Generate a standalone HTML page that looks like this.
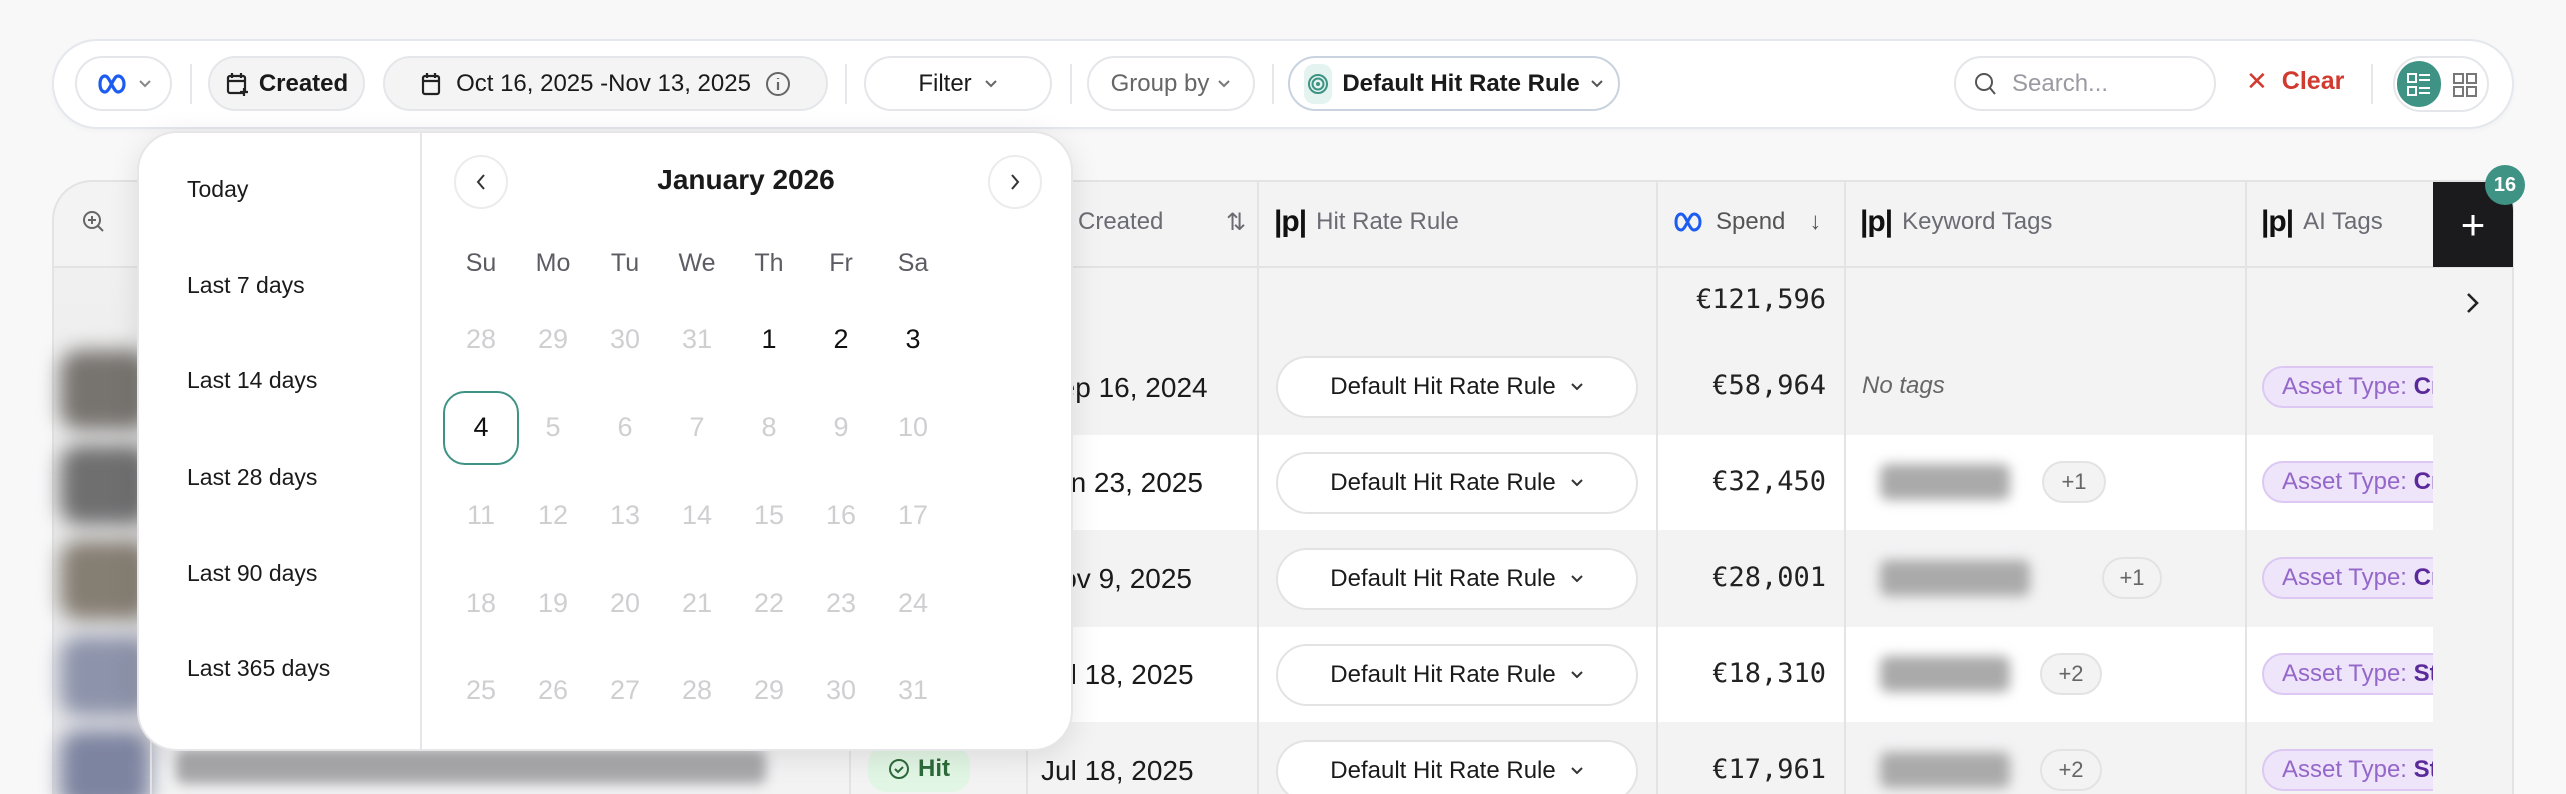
<!DOCTYPE html>
<html><head><meta charset="utf-8">
<style>
*{box-sizing:border-box;margin:0;padding:0}
html{width:2566px;height:794px;overflow:hidden}
body{width:2566px;height:794px;overflow:hidden;background:#f8f8f9;font-family:"Liberation Sans",sans-serif;color:#1a1a1a;position:relative}
.a{position:absolute}
.btn{position:absolute;top:56px;height:55px;border:2px solid #e4e6ea;border-radius:28px;background:#fff;display:flex;align-items:center;justify-content:center;font-size:24px;gap:12px}
.sep{position:absolute;top:64px;width:2px;height:40px;background:#e6e7ea}
.vl{position:absolute;top:180px;width:2px;height:614px;background:#e3e3e3}
.hd{position:absolute;top:200px;font-size:24px;color:#6b6b73;display:flex;align-items:center;gap:10px;height:44px}
.pp{font-weight:bold;color:#111;font-size:30px;letter-spacing:-1px}
.rule{position:absolute;left:1276px;width:362px;height:62px;border:2px solid #e3e3e3;border-radius:31px;background:#fff;display:flex;align-items:center;justify-content:center;font-size:24px;gap:14px}
.sp{position:absolute;right:740px;font-family:"DejaVu Sans Mono","Liberation Mono",monospace;font-size:27px;color:#222}
.dt{position:absolute;left:1041px;font-size:28px;color:#1a1a1a}
.ai{position:absolute;left:2262px;width:200px;height:42px;border:2px solid #dcc8f3;background:#efe5fb;border-radius:21px 0 0 21px;font-size:24px;color:#9467c9;padding-left:18px;line-height:38px;white-space:nowrap;overflow:hidden}
.ai b{color:#5b2a9a}
.pl{position:absolute;height:42px;border:2px solid #e3e3e3;border-radius:21px;background:#f3f3f3;font-size:22px;color:#666;display:flex;align-items:center;justify-content:center;width:62px}
.bl{position:absolute;height:36px;filter:blur(6px);background:#9a9a9a;border-radius:8px}
.th{position:absolute;left:60px;width:90px;height:80px;filter:blur(10px);border-radius:20px}
.pre{position:absolute;left:187px;font-size:23px;color:#1a1a1a;font-weight:500}
.wd{position:absolute;top:249px;font-size:25px;color:#5c5c64;width:60px;text-align:center}
.dy{position:absolute;font-size:27px;width:60px;text-align:center;color:#cfcfd2}
</style></head><body>

<div class="a" style="left:52px;top:39px;width:2462px;height:90px;background:#fff;border:2px solid #e4e7ec;border-radius:46px;box-shadow:0 2px 6px rgba(0,0,0,.03)"></div>
<div class="btn" style="left:75px;width:97px;gap:8px">
<svg width="34" height="22" viewBox="0 0 34 22"><path d="M4 11c0-5 2-8 5-8 5 0 8 16 13 16 3 0 6-3 6-8s-3-8-6-8C17 3 14 19 9 19c-3 0-5-3-5-8z" fill="none" stroke="#1d5cf0" stroke-width="3.2"/></svg>
<svg width="14" height="10" viewBox="0 0 14 10"><path d="M2 2l5 5 5-5" fill="none" stroke="#888" stroke-width="2"/></svg></div>
<div class="sep" style="left:190px"></div>
<div class="btn" style="left:208px;width:157px;background:#f4f4f5;font-weight:bold;gap:10px">
<svg width="24" height="26" viewBox="0 0 24 26"><rect x="3" y="5" width="17" height="17" rx="2" fill="none" stroke="#222" stroke-width="2.2"/><path d="M7 2v5M16 2v5M3 10h17" stroke="#222" stroke-width="2.2"/><path d="M19 17v8M15 21h8" stroke="#222" stroke-width="2.2"/></svg>Created</div>
<div class="btn" style="left:383px;width:445px;background:#f4f4f5;font-weight:500;gap:14px">
<svg width="22" height="26" viewBox="0 0 22 26"><rect x="3" y="5" width="16" height="18" rx="2" fill="none" stroke="#222" stroke-width="2.2"/><path d="M7 2v5M15 2v5M3 10h16" stroke="#222" stroke-width="2.2"/></svg>
<span>Oct 16, 2025 -Nov 13, 2025</span>
<svg width="26" height="26" viewBox="0 0 26 26"><circle cx="13" cy="13" r="11" fill="none" stroke="#666" stroke-width="2"/><path d="M13 11v8M13 7v1" stroke="#666" stroke-width="2.2"/></svg></div>
<div class="sep" style="left:845px"></div>
<div class="btn" style="left:864px;width:188px;font-weight:500">Filter <svg width="14" height="10" viewBox="0 0 14 10"><path d="M2 2l5 5 5-5" fill="none" stroke="#666" stroke-width="2"/></svg></div>
<div class="sep" style="left:1070px"></div>
<div class="btn" style="left:1087px;width:168px;color:#666;font-weight:500;gap:8px">Group by <svg width="14" height="10" viewBox="0 0 14 10"><path d="M2 2l5 5 5-5" fill="none" stroke="#777" stroke-width="2"/></svg></div>
<div class="sep" style="left:1272px"></div>
<div class="btn" style="left:1288px;width:332px;border-color:#c9d3df;font-weight:bold;gap:10px">
<span style="width:28px;height:40px;background:#e4f3ef;border-radius:10px;display:flex;align-items:center;justify-content:center"><svg width="22" height="22" viewBox="0 0 22 22"><circle cx="11" cy="11" r="9" fill="none" stroke="#3d9383" stroke-width="2"/><circle cx="11" cy="11" r="5.5" fill="none" stroke="#3d9383" stroke-width="2"/><circle cx="11" cy="11" r="2" fill="#3d9383"/></svg></span>
Default Hit Rate Rule <svg width="14" height="10" viewBox="0 0 14 10"><path d="M2 2l5 5 5-5" fill="none" stroke="#555" stroke-width="2"/></svg></div>
<div class="btn" style="left:1954px;width:262px;justify-content:flex-start;padding-left:18px;color:#9a9aa2;gap:14px">
<svg width="24" height="26" viewBox="0 0 24 26"><circle cx="10" cy="11" r="8" fill="none" stroke="#555" stroke-width="2"/><path d="M16 17l5 6" stroke="#555" stroke-width="2"/></svg>Search...</div>
<div class="a" style="left:2246px;top:66px;font-size:25px;color:#d13a2f;font-weight:bold;display:flex;align-items:center;gap:14px"><span style="font-weight:normal;font-size:26px">✕</span>Clear</div>
<div class="sep" style="left:2371px"></div>
<div class="a" style="left:2393px;top:56px;width:96px;height:56px;border:2px solid #e4e6ea;border-radius:28px;background:#fff"></div>
<div class="a" style="left:2397px;top:61px;width:44px;height:46px;border-radius:23px;background:#3f9384"></div>
<svg class="a" style="left:2405px;top:71px" width="28" height="28" viewBox="0 0 28 28"><rect x="3" y="3" width="8" height="8" fill="none" stroke="#fff" stroke-width="2"/><rect x="3" y="16" width="8" height="8" fill="none" stroke="#fff" stroke-width="2"/><path d="M14 4h11M14 9h11M14 17h11M14 22h11" stroke="#fff" stroke-width="2"/></svg>
<svg class="a" style="left:2451px;top:71px" width="28" height="28" viewBox="0 0 28 28"><rect x="3" y="3" width="9" height="9" fill="none" stroke="#777" stroke-width="2"/><rect x="16" y="3" width="9" height="9" fill="none" stroke="#777" stroke-width="2"/><rect x="3" y="16" width="9" height="9" fill="none" stroke="#777" stroke-width="2"/><rect x="16" y="16" width="9" height="9" fill="none" stroke="#777" stroke-width="2"/></svg>

<div class="a" style="left:52px;top:180px;width:2462px;height:614px;background:#f3f3f4;border:2px solid #e3e3e3;border-bottom:none;border-radius:40px 30px 0 0;overflow:hidden"></div>
<div class="a" style="left:54px;top:266px;width:2458px;height:2px;background:#e3e3e3"></div>
<div class="a" style="left:150px;top:435px;width:2283px;height:95px;background:#fff"></div>
<div class="a" style="left:150px;top:627px;width:2283px;height:95px;background:#fff"></div>
<div class="a" style="left:54px;top:268px;width:96px;height:526px;background:linear-gradient(#f0f0f0,#e8e8ea)"></div>
<div class="th" style="top:350px;background:#77736f"></div>
<div class="th" style="top:445px;background:#6f6f70"></div>
<div class="th" style="top:540px;background:#857e73"></div>
<div class="th" style="top:636px;background:#8d93aa"></div>
<div class="th" style="top:730px;background:#7d84a0"></div>
<div class="vl" style="left:150px"></div><div class="vl" style="left:849px"></div><div class="vl" style="left:1026px"></div><div class="vl" style="left:1257px"></div><div class="vl" style="left:1656px"></div><div class="vl" style="left:1844px"></div><div class="vl" style="left:2245px"></div>
<svg class="a" style="left:80px;top:208px" width="28" height="28" viewBox="0 0 28 28"><circle cx="12" cy="12" r="8" fill="none" stroke="#666" stroke-width="2"/><path d="M12 8v8M8 12h8M18 18l5 5" stroke="#666" stroke-width="2"/></svg>

<div class="hd" style="left:1078px;font-weight:500">Created<span style="position:absolute;left:148px;font-size:24px">⇅</span></div>
<div class="hd" style="left:1274px"><span class="pp">|p|</span>Hit Rate Rule</div>
<div class="hd" style="left:1672px;color:#555"><svg width="34" height="22" viewBox="0 0 34 22"><path d="M4 11c0-5 2-8 5-8 5 0 8 16 13 16 3 0 6-3 6-8s-3-8-6-8C17 3 14 19 9 19c-3 0-5-3-5-8z" fill="none" stroke="#1d5cf0" stroke-width="3"/></svg>Spend<span style="margin-left:14px">↓</span></div>
<div class="hd" style="left:1860px"><span class="pp">|p|</span>Keyword Tags</div>
<div class="hd" style="left:2261px"><span class="pp">|p|</span>AI Tags</div>

<div class="sp" style="top:284px">€121,596</div>
<div class="sp" style="top:370px">€58,964</div>
<div class="sp" style="top:466px">€32,450</div>
<div class="sp" style="top:562px">€28,001</div>
<div class="sp" style="top:658px">€18,310</div>
<div class="sp" style="top:754px">€17,961</div>

<div class="rule" style="top:356px">Default Hit Rate Rule <svg width="14" height="10" viewBox="0 0 14 10"><path d="M2 2l5 5 5-5" fill="none" stroke="#333" stroke-width="2"/></svg></div>
<div class="rule" style="top:452px">Default Hit Rate Rule <svg width="14" height="10" viewBox="0 0 14 10"><path d="M2 2l5 5 5-5" fill="none" stroke="#333" stroke-width="2"/></svg></div>
<div class="rule" style="top:548px">Default Hit Rate Rule <svg width="14" height="10" viewBox="0 0 14 10"><path d="M2 2l5 5 5-5" fill="none" stroke="#333" stroke-width="2"/></svg></div>
<div class="rule" style="top:644px">Default Hit Rate Rule <svg width="14" height="10" viewBox="0 0 14 10"><path d="M2 2l5 5 5-5" fill="none" stroke="#333" stroke-width="2"/></svg></div>
<div class="rule" style="top:740px">Default Hit Rate Rule <svg width="14" height="10" viewBox="0 0 14 10"><path d="M2 2l5 5 5-5" fill="none" stroke="#333" stroke-width="2"/></svg></div>

<div class="a" style="left:1862px;top:372px;font-size:24px;font-style:italic;color:#666">No tags</div>
<div class="bl" style="left:1880px;top:464px;width:130px;background:#aaa"></div><div class="pl" style="left:2042px;top:461px;width:64px">+1</div>
<div class="bl" style="left:1880px;top:560px;width:150px;background:#aaa"></div><div class="pl" style="left:2102px;top:557px;width:60px">+1</div>
<div class="bl" style="left:1880px;top:656px;width:130px;background:#aaa"></div><div class="pl" style="left:2040px;top:653px">+2</div>
<div class="bl" style="left:1880px;top:752px;width:130px;background:#aaa"></div><div class="pl" style="left:2040px;top:749px">+2</div>

<div class="ai" style="top:366px">Asset Type: <b>Cr</b></div>
<div class="ai" style="top:461px">Asset Type: <b>Cr</b></div>
<div class="ai" style="top:557px">Asset Type: <b>Cr</b></div>
<div class="ai" style="top:653px">Asset Type: <b>St</b></div>
<div class="ai" style="top:749px">Asset Type: <b>St</b></div>
<div class="a" style="left:2433px;top:268px;width:79px;height:526px;background:#f3f3f4"></div>
<div class="a" style="left:2433px;top:182px;width:80px;height:85px;background:#1b1b1d;border-radius:0 28px 0 0;color:#fff;font-size:42px;display:flex;align-items:center;justify-content:center;font-weight:300">+</div>
<div class="a" style="left:2485px;top:165px;width:40px;height:40px;border-radius:20px;background:#3f9384;color:#fff;font-weight:bold;font-size:20px;display:flex;align-items:center;justify-content:center">16</div>
<svg class="a" style="left:2462px;top:290px" width="20" height="26" viewBox="0 0 20 26"><path d="M6 4l9 9-9 9" fill="none" stroke="#222" stroke-width="2.6"/></svg>

<div class="dt" style="top:372px">Sep 16, 2024</div>
<div class="dt" style="top:467px">Jun 23, 2025</div>
<div class="dt" style="top:563px">Nov 9, 2025</div>
<div class="dt" style="top:659px">Jul 18, 2025</div>
<div class="dt" style="top:755px">Jul 18, 2025</div>
<div class="bl" style="left:176px;top:750px;width:590px;height:34px;background:#a8a8aa"></div>
<div class="a" style="left:868px;top:746px;width:102px;height:46px;border-radius:18px;background:#e2f6e5;color:#2d6a3a;font-size:24px;font-weight:bold;display:flex;align-items:center;justify-content:center;gap:8px"><svg width="22" height="22" viewBox="0 0 22 22"><circle cx="11" cy="11" r="9" fill="none" stroke="#2d6a3a" stroke-width="2"/><path d="M7 11l3 3 5-5" fill="none" stroke="#2d6a3a" stroke-width="2"/></svg>Hit</div>

<div class="a" style="left:137px;top:131px;width:936px;height:620px;background:#fff;border:2px solid #e6e6e8;border-radius:40px;box-shadow:0 6px 30px rgba(0,0,0,.1)"></div>
<div class="a" style="left:420px;top:133px;width:2px;height:616px;background:#e6e6e8"></div>
<div class="pre" style="top:176px">Today</div>
<div class="pre" style="top:272px">Last 7 days</div>
<div class="pre" style="top:367px">Last 14 days</div>
<div class="pre" style="top:464px">Last 28 days</div>
<div class="pre" style="top:560px">Last 90 days</div>
<div class="pre" style="top:655px">Last 365 days</div>
<div class="a" style="left:454px;top:155px;width:54px;height:54px;border:2px solid #ececee;border-radius:27px;display:flex;align-items:center;justify-content:center"><svg width="14" height="20" viewBox="0 0 14 20"><path d="M10 3l-6 7 6 7" fill="none" stroke="#333" stroke-width="2"/></svg></div>
<div class="a" style="left:988px;top:155px;width:54px;height:54px;border:2px solid #ececee;border-radius:27px;display:flex;align-items:center;justify-content:center"><svg width="14" height="20" viewBox="0 0 14 20"><path d="M4 3l6 7-6 7" fill="none" stroke="#333" stroke-width="2"/></svg></div>
<div class="a" style="left:560px;top:164px;width:372px;text-align:center;font-size:28px;font-weight:bold;color:#1a1a1a">January 2026</div>
<div class="wd" style="left:451px">Su</div><div class="wd" style="left:523px">Mo</div><div class="wd" style="left:595px">Tu</div><div class="wd" style="left:667px">We</div><div class="wd" style="left:739px">Th</div><div class="wd" style="left:811px">Fr</div><div class="wd" style="left:883px">Sa</div>
<div class="dy" style="left:451px;top:324px">28</div><div class="dy" style="left:523px;top:324px">29</div><div class="dy" style="left:595px;top:324px">30</div><div class="dy" style="left:667px;top:324px">31</div><div class="dy" style="left:739px;top:324px;color:#111">1</div><div class="dy" style="left:811px;top:324px;color:#111">2</div><div class="dy" style="left:883px;top:324px;color:#111">3</div>
<div class="a" style="left:443px;top:391px;width:76px;height:74px;border:2px solid #3f9384;border-radius:22px"></div>
<div class="dy" style="left:451px;top:412px;color:#111">4</div><div class="dy" style="left:523px;top:412px">5</div><div class="dy" style="left:595px;top:412px">6</div><div class="dy" style="left:667px;top:412px">7</div><div class="dy" style="left:739px;top:412px">8</div><div class="dy" style="left:811px;top:412px">9</div><div class="dy" style="left:883px;top:412px">10</div>
<div class="dy" style="left:451px;top:500px">11</div><div class="dy" style="left:523px;top:500px">12</div><div class="dy" style="left:595px;top:500px">13</div><div class="dy" style="left:667px;top:500px">14</div><div class="dy" style="left:739px;top:500px">15</div><div class="dy" style="left:811px;top:500px">16</div><div class="dy" style="left:883px;top:500px">17</div>
<div class="dy" style="left:451px;top:588px">18</div><div class="dy" style="left:523px;top:588px">19</div><div class="dy" style="left:595px;top:588px">20</div><div class="dy" style="left:667px;top:588px">21</div><div class="dy" style="left:739px;top:588px">22</div><div class="dy" style="left:811px;top:588px">23</div><div class="dy" style="left:883px;top:588px">24</div>
<div class="dy" style="left:451px;top:675px">25</div><div class="dy" style="left:523px;top:675px">26</div><div class="dy" style="left:595px;top:675px">27</div><div class="dy" style="left:667px;top:675px">28</div><div class="dy" style="left:739px;top:675px">29</div><div class="dy" style="left:811px;top:675px">30</div><div class="dy" style="left:883px;top:675px">31</div>
</body></html>
